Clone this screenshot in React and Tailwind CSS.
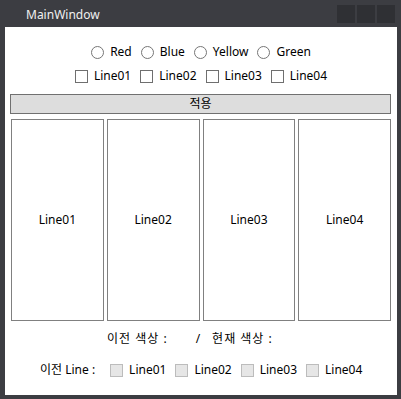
import React from 'react';

const font = { fontFamily: '"Noto Sans", "Noto Sans CJK KR", sans-serif' };

function Radio({ label }) {
  return (
    <label className="flex items-center gap-[6px]">
      <span className="w-[13px] h-[13px] rounded-full border border-[#767676] bg-white" />
      <span>{label}</span>
    </label>
  );
}

function Check({ label, disabled }) {
  return (
    <label className="flex items-center gap-[6px]">
      <span
        className={
          disabled
            ? 'w-[13px] h-[13px] border border-[#bcbcbc] bg-[#e6e6e6]'
            : 'w-[13px] h-[13px] border border-[#6f6f6f] bg-white'
        }
      />
      <span>{label}</span>
    </label>
  );
}

export default function App() {
  const lines = ['Line01', 'Line02', 'Line03', 'Line04'];
  return (
    <div className="w-[401px] h-[399px] bg-[#3c3d42] flex flex-col text-[12px] text-black" style={font}>
      {/* Title bar */}
      <div className="h-[27px] flex items-center justify-between pl-[26px] pr-[6px]">
        <span className="text-[12px] text-[#f0f0f0] leading-none pt-[2px]">MainWindow</span>
        <div className="flex gap-[2px] self-start mt-[5px]">
          <div className="w-[18px] h-[18px] bg-[#2f3034]" />
          <div className="w-[18px] h-[18px] bg-[#2f3034]" />
          <div className="w-[18px] h-[18px] bg-[#2f3034]" />
        </div>
      </div>

      {/* Client area */}
      <div className="ml-[5px] mr-[4px] mb-[4px] flex-1 bg-white flex flex-col">
        <div className="mt-[17px] h-[16px] flex items-center justify-center gap-[9px]">
          <Radio label="Red" />
          <Radio label="Blue" />
          <Radio label="Yellow" />
          <Radio label="Green" />
        </div>

        <div className="mt-[8px] h-[16px] flex items-center justify-center gap-[9px]">
          {lines.map((l) => (
            <Check key={l} label={l} />
          ))}
        </div>

        <button className="mt-[10px] ml-[5px] mr-[6px] h-[20px] bg-[#dddddd] border border-[#707070] flex items-center justify-center">
          적용
        </button>

        <div className="mt-[5px] ml-[6px] mr-[6px] h-[202px] grid grid-cols-4 gap-[3px]">
          {lines.map((l) => (
            <div key={l} className="border border-[#808080] flex items-center justify-center">
              {l}
            </div>
          ))}
        </div>

        <div className="mt-[10px] h-[16px] flex items-center pl-[102px]">
          <span className="tracking-[1px]">이전 색상 :</span>
          <span className="ml-[28px]">/</span>
          <span className="ml-[12px] tracking-[1px]">현재 색상 :</span>
        </div>

        <div className="mt-[15px] h-[16px] flex items-center pl-[35px] gap-[9px]">
          <span className="mr-[6px]">이전 Line :</span>
          {lines.map((l) => (
            <Check key={l} label={l} disabled />
          ))}
        </div>
      </div>
    </div>
  );
}
